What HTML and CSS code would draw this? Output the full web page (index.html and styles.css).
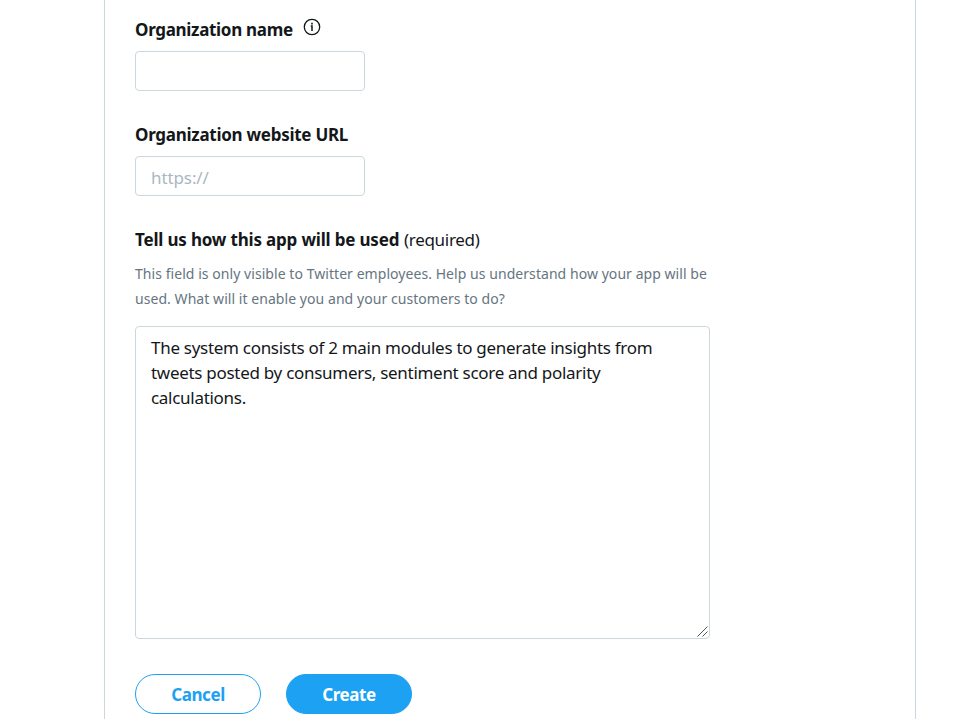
FILE: index.html
```html
<!DOCTYPE html>
<html lang="en">
<head>
<meta charset="utf-8">
<title>Create an app</title>
<link rel="stylesheet" href="styles.css">
</head>
<body>
<main class="panel">
  <form class="form">
    <div class="field">
      <label class="label" for="org"><span class="name">Organization name</span><svg class="info" width="18" height="18" viewBox="0 0 18 18" aria-hidden="true"><circle cx="9" cy="9" r="7.7" fill="none" stroke="currentColor" stroke-width="1.3"/><path d="M8.2 4.8h1.6v1.6H8.2z" fill="currentColor"/><path d="M7.800 8H9v5" fill="none" stroke="currentColor" stroke-width="1.500"/></svg></label>
      <input class="input" id="org" type="text">
    </div>
    <div class="field">
      <label class="label" for="url"><span class="url">Organization website URL</span></label>
      <input class="input" id="url" type="text" placeholder="https://">
    </div>
    <div class="field last">
      <label class="label" for="usage"><span class="tell">Tell us how this app will be used</span><span class="required">(required)</span></label>
      <p class="help">This field is only visible to Twitter employees. Help us understand how your app will be<br>used. What will it enable you and your customers to do?</p>
      <div class="area-wrap">
        <textarea class="input area" id="usage" spellcheck="false">The system consists of 2 main modules to generate insights from tweets posted by consumers, sentiment score and polarity calculations.</textarea>
        <svg class="grip" width="11" height="11" viewBox="0 0 11 11" aria-hidden="true"><path d="M.5 10.5l10-10M5.5 10.5l5-5" fill="none" stroke="#555" stroke-width="1"/></svg>
      </div>
    </div>
    <div class="actions">
      <button class="button" type="button">Cancel</button>
      <button class="button primary" type="button">Create</button>
    </div>
  </form>
</main>
</body>
</html>
```
FILE: styles.css
```css
* { box-sizing: border-box; }
html, body { margin: 0; height: 100%; overflow: hidden; background: #fff; }
body, input, textarea, button { font-family: "Noto Sans", "Open Sans", sans-serif; color: #14171a; }
.panel {
  width: 812px;
  height: 719px;
  margin-left: 104px;
  padding: 17px 30px 0;
  border: solid #ccd6dd;
  border-width: 0 1px;
}
.form { width: 575px; }
.field { display: flex; flex-direction: column; align-items: flex-start; margin-bottom: 31px; }
.last { margin-bottom: 0; }
.label {
  display: flex;
  height: 25px;
  margin-bottom: 9px;
  font-size: 17px;
  font-weight: 700;
  line-height: 25px;
  white-space: nowrap;
}
.name { width: 158px; letter-spacing: -0.31px; }
.url { letter-spacing: -0.27px; }
.tell { width: 264px; letter-spacing: -0.18px; }
.info { margin: 1px 0 0 9.5px; }
.required { margin-left: 5px; font-weight: 400; letter-spacing: -0.3px; }
.input {
  width: 230px;
  height: 40px;
  margin: 0;
  padding: 3px 15px 0;
  border: 1px solid #ccd6dd;
  border-radius: 4px;
  background: #fff;
  font-size: 17px;
  letter-spacing: -0.1px;
  outline: none;
}
.input::placeholder { color: #aab8c2; opacity: 1; }
.help { margin: 0 0 15px; font-size: 14px; line-height: 25px; color: #66757f; white-space: nowrap; letter-spacing: 0.055px; }
.area-wrap { position: relative; }
.area {
  display: block;
  width: 575px;
  height: 313px;
  padding: 8px 15px;
  line-height: 25px;
  letter-spacing: -0.29px;
  resize: none;
}
.grip { position: absolute; right: 2px; bottom: 2px; }
.actions { display: flex; gap: 25px; margin-top: 35px; }
.button {
  width: 126px;
  height: 40px;
  padding: 1px 0 0;
  border: 1px solid #1da1f2;
  border-radius: 20px;
  background: #fff;
  color: #1da1f2;
  font-size: 17px;
  font-weight: 700;
  letter-spacing: -0.4px;
}
.primary { background: #1da1f2; color: #fff; }
```
